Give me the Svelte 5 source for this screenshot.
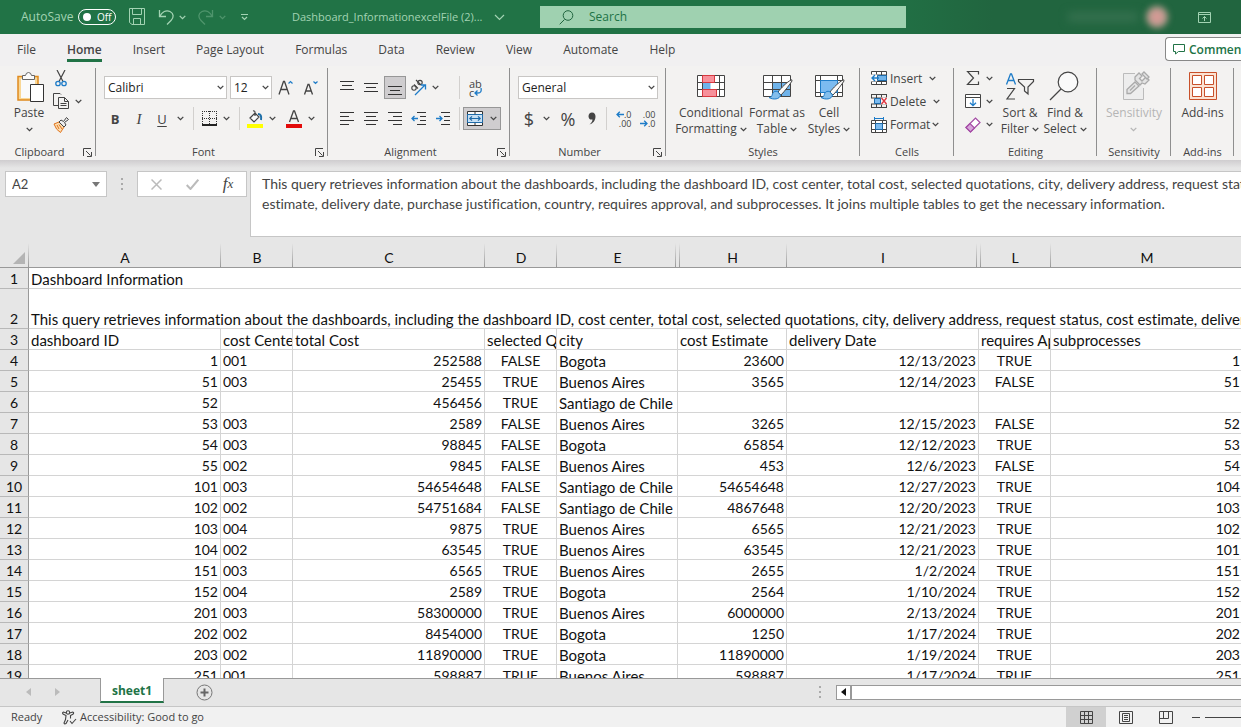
<script>
  const tabs = ['File', 'Home', 'Insert', 'Page Layout', 'Formulas', 'Data', 'Review', 'View', 'Automate', 'Help'];

  const description =
    'This query retrieves information about the dashboards, including the dashboard ID, cost center, total cost, selected quotations, city, delivery address, request status, cost estimate, delivery date, purchase justification, country, requires approval, and subprocesses. It joins multiple tables to get the necessary information.';
  // the formula box breaks its text before "estimate"
  const formula = description.replace('cost estimate', 'cost\nestimate');

  const columns = [
    { name: 'A', width: 192, align: 'right' },
    { name: 'B', width: 72, align: 'left' },
    { name: 'C', width: 192, align: 'right' },
    { name: 'D', width: 72, align: 'center' },
    { name: 'E', width: 121, align: 'text', hiddenAfter: true },
    { name: 'H', width: 109, align: 'right', hiddenBefore: true },
    { name: 'I', width: 192, align: 'right', hiddenAfter: true },
    { name: 'L', width: 72, align: 'center', hiddenBefore: true },
    { name: 'M', width: 192, align: 'right' }
  ];

  const titles = ['dashboard ID', 'cost Center', 'total Cost', 'selected Quotation', 'city', 'cost Estimate', 'delivery Date', 'requires Approval', 'subprocesses'];

  const rows = [
    ['1', '001', '252588', 'FALSE', 'Bogota', '23600', '12/13/2023', 'TRUE', '1'],
    ['51', '003', '25455', 'TRUE', 'Buenos Aires', '3565', '12/14/2023', 'FALSE', '51'],
    ['52', '', '456456', 'TRUE', 'Santiago de Chile', '', '', '', ''],
    ['53', '003', '2589', 'FALSE', 'Buenos Aires', '3265', '12/15/2023', 'FALSE', '52'],
    ['54', '003', '98845', 'FALSE', 'Bogota', '65854', '12/12/2023', 'TRUE', '53'],
    ['55', '002', '9845', 'FALSE', 'Buenos Aires', '453', '12/6/2023', 'FALSE', '54'],
    ['101', '003', '54654648', 'FALSE', 'Santiago de Chile', '54654648', '12/27/2023', 'TRUE', '104'],
    ['102', '002', '54751684', 'FALSE', 'Santiago de Chile', '4867648', '12/20/2023', 'TRUE', '103'],
    ['103', '004', '9875', 'TRUE', 'Buenos Aires', '6565', '12/21/2023', 'TRUE', '102'],
    ['104', '002', '63545', 'TRUE', 'Buenos Aires', '63545', '12/21/2023', 'TRUE', '101'],
    ['151', '003', '6565', 'TRUE', 'Buenos Aires', '2655', '1/2/2024', 'TRUE', '151'],
    ['152', '004', '2589', 'TRUE', 'Bogota', '2564', '1/10/2024', 'TRUE', '152'],
    ['201', '003', '58300000', 'TRUE', 'Buenos Aires', '6000000', '2/13/2024', 'TRUE', '201'],
    ['202', '002', '8454000', 'TRUE', 'Bogota', '1250', '1/17/2024', 'TRUE', '202'],
    ['203', '002', '11890000', 'TRUE', 'Bogota', '11890000', '1/19/2024', 'TRUE', '203'],
    ['251', '001', '598887', 'TRUE', 'Buenos Aires', '598887', '1/17/2024', 'TRUE', '251']
  ];
</script>

{#snippet chev()}
  <svg class="chev" width="7" height="5" viewBox="0 0 7 5"><path d="M.7.9 3.5 3.6 6.3.9" fill="none" stroke="currentColor" stroke-width="1.3" /></svg>
{/snippet}

{#snippet lines(d)}
  <svg width="16" height="16" viewBox="0 0 16 16"><path {d} fill="none" stroke="#333" /></svg>
{/snippet}

{#snippet brush()}
  <path d="M30 9c-4 2-10 8-13 12l3 3c4-4 9-11 11-14q0-2-1-1z" fill="#fafafa" stroke="#444" />
  <path d="M16.500 20.500c-4-1-5 2-5.500 4-.5 1.500-2 2-3 2 4 2.500 11 2 11.500-2.500z" fill="#83beec" stroke="#1e7cc8" />
{/snippet}

{#snippet groupLabel(text, launcher)}
  <div class="group-label">
    <span>{text}</span>
    {#if launcher}
      <button class="launcher" aria-label="{text} settings">
        <svg width="9" height="9" viewBox="0 0 9 9"><path d="M.5 8V.5H8M3 3l4.500 4.500M8.500 4v4.500H4" fill="none" stroke="#444" /></svg>
      </button>
    {/if}
  </div>
{/snippet}

<div class="app">
  <header class="titlebar">
    <label class="autosave">
      AutoSave
      <input type="checkbox" />
      <span class="toggle"><i></i>Off</span>
    </label>
    <button class="q-save" aria-label="Save">
      <svg width="17" height="18" viewBox="0 0 17 18"><path d="M.5.500h15v16H3l-2.500-2zM3.500.500v6h9v-6M4.500 16.500v-6h7v6" fill="none" stroke="currentColor" /></svg>
    </button>
    <button class="q-undo" aria-label="Undo">
      <svg width="17" height="18" viewBox="0 0 17 18"><path d="M1.500 2v6.500H8M2 8C4 4 8 1.500 12 3.500s4 6 1 9L9 16.500" fill="none" stroke="currentColor" stroke-width="1.3" /></svg>
      {@render chev()}
    </button>
    <button class="q-undo faded" aria-label="Redo">
      <svg width="17" height="18" viewBox="0 0 17 18"><path d="M14.500 2v6.500H8M14 8C12 4 8 1.500 4 3.500s-4 6-1 9l4 4" fill="none" stroke="currentColor" stroke-width="1.3" /></svg>
      {@render chev()}
    </button>
    <button class="q-more" aria-label="Customize Quick Access Toolbar">
      <svg width="9" height="8" viewBox="0 0 9 8"><path d="M1 1.500h7M2 4l2.500 2.500L7 4" fill="none" stroke="currentColor" stroke-width="1.200" /></svg>
    </button>
    <button class="doc">
      Dashboard_InformationexcelFile (2)...
      <svg width="11" height="7" viewBox="0 0 11 7"><path d="m1 1 4.500 4.500L10 1" fill="none" stroke="currentColor" stroke-width="1.200" /></svg>
    </button>
    <label class="search">
      <svg width="15" height="15" viewBox="0 0 15 15"><path d="M5.500 9.500.700 14.300" stroke="currentColor" /><circle cx="9" cy="5.500" r="4.800" fill="none" stroke="currentColor" /></svg>
      <input type="text" placeholder="Search" aria-label="Search" />
    </label>
    <div class="account"><span class="user"></span><span class="avatar"></span></div>
    <button class="display" aria-label="Ribbon Display Options">
      <svg width="13" height="11" viewBox="0 0 13 11"><path d="M.5.500h12v10H.500zM.500 2.500h12M6.500 9V4.500M4.500 6.500l2-2 2 2" fill="none" stroke="currentColor" /></svg>
    </button>
  </header>

  <nav class="tabs">
    {#each tabs as tab}
      <button class:active={tab === 'Home'}>{tab}</button>
    {/each}
    <button class="comments">
      <svg width="12" height="12" viewBox="0 0 12 12"><path d="M.5 1.500h11v7H5.500l-3 2.500V8.500h-2z" fill="none" stroke="currentColor" /></svg>
      Comments
    </button>
  </nav>

  <section class="ribbon">
    <div class="group clipboard">
      <div class="content">
        <button class="big paste">
          <svg width="32" height="32" viewBox="0 0 32 32">
            <path d="M5 5.500h20V29H5z" fill="#f9d795" stroke="#e08a1e" stroke-width="1.500" />
            <path d="M8 8h14v19H8z" fill="#fafafa" />
            <path d="M9.500 8.500v-4h3q.5-3 3-3t3 3h3v4z" fill="#fafafa" stroke="#666" />
            <path d="M17.500 13.500h13v17h-13z" fill="#fff" stroke="#333" />
          </svg>
          <span>Paste</span>
          {@render chev()}
        </button>
        <div class="stack">
          <button aria-label="Cut">
            <svg width="16" height="17" viewBox="0 0 16 17"><path d="m4 0 6 11.500M12 0 6 11.500" stroke="#444" stroke-width="1.200" /><g fill="none" stroke="#1e7cc8" stroke-width="1.300"><circle cx="5" cy="13.500" r="2.200" /><circle cx="11" cy="13.500" r="2.200" /></g></svg>
          </button>
          <button aria-label="Copy">
            <svg width="17" height="17" viewBox="0 0 17 17"><path d="M5.500 12.500h-5V.500H7l1 1M5.500 4.500h6l4 4v7h-10zM11.500 4.500v4h4M7.500 10.500h6M7.500 12.500h6" fill="none" stroke="#444" /></svg>
            {@render chev()}
          </button>
          <button aria-label="Format Painter">
            <svg width="16" height="16" viewBox="0 0 16 16"><path d="m1 7 5-2 5 5-3.500 5.500Q3 13 1 7zM4 8l2 4M6 7.500 9 12" fill="#fbdcae" stroke="#e0731e" /><path d="m6 5 2-2 2.500 1.500 3-4 2 2-4 3L13 8l-2 2z" fill="#eee" stroke="#444" /></svg>
          </button>
        </div>
      </div>
      {@render groupLabel('Clipboard', true)}
    </div>

    <div class="group font">
      <div class="content rows">
        <div class="row font-top">
          <span class="select"><select aria-label="Font"><option>Calibri</option></select>{@render chev()}</span>
          <span class="select"><select aria-label="Font size"><option>12</option></select>{@render chev()}</span>
          <button aria-label="Increase Font Size">
            <svg width="16" height="18" viewBox="0 0 16 18"><path d="M1 15.500 5.500 2.500h1L11 15.500M2.700 10.500h6.600" fill="none" stroke="#444" stroke-width="1.300" /><path d="m10.500 4.500 2-2 2 2" fill="none" stroke="#1e7cc8" stroke-width="1.200" /></svg>
          </button>
          <button aria-label="Decrease Font Size">
            <svg width="16" height="18" viewBox="0 0 16 18"><path d="M1.500 15.500 5 5.500h1l3.500 10M3 12h5" fill="none" stroke="#444" stroke-width="1.300" /><path d="m10.500 2.500 2 2 2-2" fill="none" stroke="#1e7cc8" stroke-width="1.200" /></svg>
          </button>
        </div>
        <div class="row font-bottom">
          <button class="letter bold">B</button>
          <button class="letter italic">I</button>
          <button class="letter underline">U</button>
          <button aria-label="Underline styles">{@render chev()}</button>
          <i class="sep"></i>
          <button aria-label="Borders">
            <svg width="15" height="15" viewBox="0 0 15 15"><path d="M0 .500h15M0 7.500h15M.500 0v15M7.500 0v15M14.500 0v15" stroke="#333" stroke-dasharray="1 1" /><path d="M0 14h15" stroke="#222" stroke-width="2" /></svg>
          </button>
          <button aria-label="Border styles">{@render chev()}</button>
          <i class="sep"></i>
          <button aria-label="Fill Color">
            <svg width="16" height="18" viewBox="0 0 16 18"><path d="M0 14h16v4H0z" fill="#ff0" /><path d="m3 8 5-5 4 4-5 5zM8 6V2.500q0-2-2-1.500" fill="#fafafa" stroke="#444" stroke-width="1.200" /><path d="M11 4q4 0 3 6" fill="none" stroke="#1f6fa8" stroke-width="2" /></svg>
          </button>
          <button aria-label="Fill colors">{@render chev()}</button>
          <span></span>
          <button aria-label="Font Color">
            <svg width="16" height="18" viewBox="0 0 16 18"><path d="M0 14h16v4H0z" fill="#e30b0b" /><path d="M3.500 12 7.500 1h1l4 11M5 8.500h6" fill="none" stroke="#444" stroke-width="1.300" /></svg>
          </button>
          <button aria-label="Font colors">{@render chev()}</button>
        </div>
      </div>
      {@render groupLabel('Font', true)}
    </div>

    <div class="group alignment">
      <div class="content rows">
        <div class="row">
          <button aria-label="Top Align">{@render lines('M1 1.500h14M3 5.500h10M1 9.500h14')}</button>
          <button aria-label="Middle Align">{@render lines('M1 3.500h14M3 7.500h10M1 11.500h14')}</button>
          <button class="pressed" aria-label="Bottom Align">{@render lines('M1 6.500h14M3 10.500h10M1 14.500h14')}</button>
          <button aria-label="Orientation">
            <svg width="18" height="17" viewBox="0 0 18 17"><g fill="none" stroke="#444" stroke-width="1.100"><circle cx="4" cy="9" r="2.200" /><path d="m4 5.500 4 4M6 1l5 5" /><circle cx="10" cy="3.600" r="2.200" /></g><path d="m5 16 10-10M11 6h4.500v4.500" fill="none" stroke="#1e7cc8" stroke-width="1.300" /></svg>
          </button>
          <button class="start" aria-label="Orientation options">{@render chev()}</button>
          <i class="sep"></i>
          <button class="wrap" aria-label="Wrap Text">
            <span>ab</span>
            <span class="wrap-end">
              c
              <svg width="8" height="9" viewBox="0 0 8 9"><path d="M7 0q1 5-3 5H1M3.500 2.500 1 5l2.500 2.500" fill="none" stroke="#1e7cc8" stroke-width="1.300" /></svg>
            </span>
          </button>
        </div>
        <div class="row">
          <button aria-label="Align Left">{@render lines('M1 1.500h14M1 5.500h9M1 9.500h14M1 13.500h9')}</button>
          <button aria-label="Center">{@render lines('M1 1.500h14M3 5.500h10M1 9.500h14M3 13.500h10')}</button>
          <button aria-label="Align Right">{@render lines('M1 1.500h14M6 5.500h9M1 9.500h14M6 13.500h9')}</button>
          <button aria-label="Decrease Indent">
            <svg width="16" height="16" viewBox="0 0 16 16"><path d="M6 1.500h9M9 5.500h6M9 9.500h6M6 13.500h9" stroke="#333" /><path d="M7 7.500H1M3.500 5 1 7.500 3.500 10" fill="none" stroke="#1e7cc8" stroke-width="1.300" /></svg>
          </button>
          <button aria-label="Increase Indent">
            <svg width="16" height="16" viewBox="0 0 16 16"><path d="M6 1.500h9M9 5.500h6M9 9.500h6M6 13.500h9" stroke="#333" /><path d="M1 7.500h6M4.500 5 7 7.500 4.500 10" fill="none" stroke="#1e7cc8" stroke-width="1.300" /></svg>
          </button>
          <i class="sep"></i>
          <button class="pressed merge" aria-label="Merge and Center">
            <svg width="16" height="15" viewBox="0 0 16 15"><path d="M.5.500h15v14H.500zM8 0v4M8 11v4" fill="#fafafa" stroke="#333" /><path d="M.500 3.500h15v8H.500z" fill="#c7e0f4" stroke="#1e6aa8" /><path d="M3 7.500h10M5 5.300 2.800 7.500 5 9.700M11 5.300l2.200 2.200L11 9.700" fill="none" stroke="#1e6aa8" stroke-width="1.200" /></svg>
            {@render chev()}
          </button>
        </div>
      </div>
      {@render groupLabel('Alignment', true)}
    </div>

    <div class="group number">
      <div class="content rows">
        <span class="select"><select aria-label="Number Format"><option>General</option></select>{@render chev()}</span>
        <div class="row">
          <button class="symbol">$</button>
          <button aria-label="Accounting formats">{@render chev()}</button>
          <button class="symbol">%</button>
          <button aria-label="Comma Style">
            <svg width="8" height="13" viewBox="0 0 8 13"><path d="M4 .500c2.500 0 3.500 1.800 3.500 4C7.500 8.500 5 11.500 1.500 12.500 3.500 11 4.500 9 4.500 7.500 2 8 .500 6.500.500 4.200S2 .500 4 .500z" fill="#444" /></svg>
          </button>
          <i class="sep"></i>
          <button class="decimal">
            <span><svg width="8" height="7" viewBox="0 0 8 7"><path d="M8 3.500H1M3.800.700 1 3.500l2.800 2.800" fill="none" stroke="#1e7cc8" stroke-width="1.300" /></svg>.0</span>
            <span>.00</span>
          </button>
          <button class="decimal">
            <span>.00</span>
            <span><svg width="8" height="7" viewBox="0 0 8 7"><path d="M0 3.500h7M4.200.700 7 3.500 4.200 6.300" fill="none" stroke="#1e7cc8" stroke-width="1.300" /></svg>.0</span>
          </button>
        </div>
      </div>
      {@render groupLabel('Number', true)}
    </div>

    <div class="group styles">
      <div class="content">
        <button class="big">
          <svg width="32" height="32" viewBox="0 0 32 32">
            <path d="M2.500 4.500h27v21h-27z" fill="#fff" /><path d="M7.500 4.500h12v7h-12zM7.500 18.500h14v7h-14z" fill="#f7919b" /><path d="M7.500 11.500h8v7h-8z" fill="#6fb3ea" />
            <path d="M2.500 4.500h27v21h-27zM2.500 11.500h27M2.500 18.500h27M7.500 4v22M24.500 4v22" fill="none" stroke="#444" />
            <path d="M7.500 4.500h12v7h-12zM7.500 18.500h14v7h-14z" fill="none" stroke="#d8383f" />
          </svg>
          <span>Conditional</span>
          <span>Formatting {@render chev()}</span>
        </button>
        <button class="big">
          <svg width="32" height="32" viewBox="0 0 32 32">
            <path d="M2.500 4.500h27v21h-27z" fill="#fff" /><path d="M11.500 11.500h18v14h-18z" fill="#6fb3ea" />
            <path d="M2.500 4.500h27v21h-27zM2.500 11.500h27M2.500 18.500h27M11.500 4v22M20.500 4v22" fill="none" stroke="#444" />
            {@render brush()}
          </svg>
          <span>Format as</span>
          <span>Table {@render chev()}</span>
        </button>
        <button class="big">
          <svg width="32" height="32" viewBox="0 0 32 32">
            <path d="M2.500 4.500h27v21h-27zM2.500 9.500h27M2.500 21.500h27M7.500 4v22M24.500 4v22" fill="#fff" stroke="#444" />
            <path d="M7.500 9.500h17v12h-17z" fill="#7cbbf0" stroke="#1e7cc8" />
            {@render brush()}
          </svg>
          <span>Cell</span>
          <span>Styles {@render chev()}</span>
        </button>
      </div>
      {@render groupLabel('Styles', false)}
    </div>

    <div class="group cells">
      <div class="content">
        <div class="stack">
          <button>
            <svg width="17" height="15" viewBox="0 0 17 15"><path d="M.500.500h15v13H.500zM.500 4h15M.500 10.500h15M5.500 0v14M10.500 0v14" fill="#fff" stroke="#444" /><path d="M6.500 4.500h9v5h-9z" fill="#6fb3ea" stroke="#1e6aa8" /><path d="M0 3.500h6v7H0z" fill="#fafafa" /><path d="M8 7H1M4 4 1 7l3 3" fill="none" stroke="#1e7cc8" stroke-width="1.400" /></svg>
            <span class="insert">Insert</span>{@render chev()}
          </button>
          <button>
            <svg width="17" height="15" viewBox="0 0 17 15"><path d="M0 .500h16M0 13.500h16M.500 0v4M.500 10v4M5.500 0v14M10.500 0v14M15.500 0v4M15.500 10v4M0 4h16M0 10h16" fill="none" stroke="#444" /><path d="M3.500 4.500h6v5h-6z" fill="#7cbbf0" stroke="#1e6aa8" /><path d="M10 3.500h7v7h-7z" fill="#fafafa" /><path d="m10.500 4 5 6M15.500 4l-5 6" stroke="#e0353f" stroke-width="1.400" /></svg>
            <span>Delete</span>{@render chev()}
          </button>
          <button>
            <svg width="17" height="16" viewBox="0 0 17 16"><path d="M.500 3.500h15v12H.500zM.500 6.500h15M.500 12.500h15M4.500 3v13M11.500 3v13" fill="#fff" stroke="#444" /><path d="M4.500 6.500h7v6h-7z" fill="#7cbbf0" stroke="#1e6aa8" /><path d="M4 1.500h8M3.500 0v3M12.500 0v3" stroke="#1e7cc8" /></svg>
            <span class="format">Format</span>{@render chev()}
          </button>
        </div>
      </div>
      {@render groupLabel('Cells', false)}
    </div>

    <div class="group editing">
      <div class="content">
        <div class="stack">
          <button aria-label="AutoSum">
            <svg width="17" height="15" viewBox="0 0 17 15"><path d="M13.500 3.500v-3h-11l6 6.500-6 6.500h11v-3" fill="none" stroke="#444" stroke-width="1.200" /></svg>
            {@render chev()}
          </button>
          <button aria-label="Fill">
            <svg width="17" height="15" viewBox="0 0 17 15"><path d="M.500.500h15v13H.500zM.500 3.500h15" fill="#fff" stroke="#444" /><path d="M8 5v6.500M5 8.700l3 3 3-3" fill="none" stroke="#1e7cc8" stroke-width="1.300" /></svg>
            {@render chev()}
          </button>
          <button aria-label="Clear">
            <svg width="17" height="16" viewBox="0 0 17 16"><path d="m1 10.500 9.500-9.500 4.500 4.500L5.500 15z" fill="#fff" stroke="#a349a4" stroke-width="1.200" /><path d="m1 10.500 4-4L9.500 11l-4 4z" fill="#d7a5da" stroke="#a349a4" stroke-width="1.200" /></svg>
            {@render chev()}
          </button>
        </div>
        <button class="big">
          <svg width="32" height="32" viewBox="0 0 32 32"><path d="M2.500 13.500 6.500 3h1l4 10.500M4 9.500h6" fill="none" stroke="#1e7cc8" stroke-width="1.300" /><path d="M3 17.500h7.500L3 28h8M14.500 8.500h15v2L24 16v7l-3.500-3v-4l-6-5.500z" fill="none" stroke="#444" stroke-width="1.200" /></svg>
          <span>Sort &amp;</span>
          <span>Filter {@render chev()}</span>
        </button>
        <button class="big">
          <svg width="32" height="32" viewBox="0 0 32 32"><circle cx="19" cy="11" r="9.800" fill="#fafafa" stroke="#444" stroke-width="1.200" /><path d="M12 18 1 29" stroke="#444" stroke-width="1.300" /></svg>
          <span>Find &amp;</span>
          <span>Select {@render chev()}</span>
        </button>
      </div>
      {@render groupLabel('Editing', false)}
    </div>

    <div class="group sensitivity">
      <div class="content">
        <button class="big" disabled>
          <svg width="32" height="32" viewBox="0 0 32 32"><path d="M17 2.500H5.500v26h20V17" fill="#ededed" stroke="#bbb" /><g fill="#e4e4e4" stroke="#aaa" stroke-width="1.300"><path d="m9 18.500 8-7.500 4 4-8.500 7.500H9z" /><path d="m12 19.500 5-5" /><path d="m17 6 4-4 3 3-2.500 2.500L24 10l4-4 3 3-4 4-3-1-2 2-5-5z" /><path d="m24 3 2-2 5 5-2 2z" /></g></svg>
          <span>Sensitivity</span>
          {@render chev()}
        </button>
      </div>
      {@render groupLabel('Sensitivity', false)}
    </div>

    <div class="group addins">
      <div class="content">
        <button class="big">
          <svg width="32" height="32" viewBox="0 0 32 32"><path d="M2.500 1.500h27v27h-27z" fill="#fbe3d3" stroke="#c8502a" /><path d="M5.500 4.500h9v9h-9zM17.500 4.500h9v9h-9zM5.500 16.500h9v9h-9zM17.500 16.500h9v9h-9z" fill="#fff" stroke="#c8502a" /></svg>
          <span>Add-ins</span>
        </button>
      </div>
      {@render groupLabel('Add-ins', false)}
    </div>
  </section>

  <section class="formula-bar">
    <span class="name-box">
      <input type="text" value="A2" aria-label="Name Box" />
      <svg width="8" height="5" viewBox="0 0 8 5"><path d="M0 0h8L4 5z" fill="#777" /></svg>
    </span>
    <svg class="grip" width="3" height="12" viewBox="0 0 3 12"><path d="M1 0v2M1 5v2M1 10v2" stroke="#aaa" stroke-width="2" /></svg>
    <div class="fx">
      <button aria-label="Cancel"><svg width="11" height="11" viewBox="0 0 11 11"><path d="m.500.500 10 10M10.500.500l-10 10" stroke="#bbb" stroke-width="1.500" /></svg></button>
      <button aria-label="Enter"><svg width="13" height="11" viewBox="0 0 13 11"><path d="m.700 6 3.800 4L12.300.700" fill="none" stroke="#bbb" stroke-width="2" /></svg></button>
      <button aria-label="Insert Function" class="func">f<small>x</small></button>
    </div>
    <textarea wrap="off" aria-label="Formula Bar" value={formula}></textarea>
  </section>

  <main class="sheet">
    <table>
      <colgroup>
        <col class="row-head" />
        {#each columns as column}
          <col style="width: {column.width}px" />
        {/each}
      </colgroup>
      <thead>
        <tr>
          <th class="corner"><svg width="12" height="12" viewBox="0 0 12 12"><path d="M12 0v12H0z" fill="#b4b4b4" /></svg></th>
          {#each columns as column}
            <th class:hidden-after={column.hiddenAfter} class:hidden-before={column.hiddenBefore}>{column.name}</th>
          {/each}
        </tr>
      </thead>
      <tbody>
        <tr>
          <th>1</th>
          <td class="text" colspan="9">Dashboard Information</td>
        </tr>
        <tr class="tall">
          <th>2</th>
          <td class="text" colspan="9">{description}</td>
        </tr>
        <tr>
          <th>3</th>
          {#each titles as title}
            <td class="text">{title}</td>
          {/each}
        </tr>
        {#each rows as row, i}
          <tr>
            <th>{i + 4}</th>
            {#each row as cell, c}
              <td class={columns[c].align}>{cell}</td>
            {/each}
          </tr>
        {/each}
      </tbody>
    </table>
  </main>

  <section class="sheet-tabs">
    <button class="arrow" aria-label="Previous sheet"><svg width="5" height="8" viewBox="0 0 5 8"><path d="M5 0v8L0 4z" fill="#bbb" /></svg></button>
    <button class="arrow" aria-label="Next sheet"><svg width="5" height="8" viewBox="0 0 5 8"><path d="M0 0v8l5-4z" fill="#bbb" /></svg></button>
    <button class="sheet-tab">sheet1</button>
    <button class="add" aria-label="New sheet"><svg width="17" height="17" viewBox="0 0 17 17"><circle cx="8.500" cy="8.500" r="7.500" fill="none" stroke="#777" /><path d="M4.500 8.500h8M8.500 4.500v8" stroke="#666" stroke-width="2" /></svg></button>
    <svg class="grip" width="3" height="12" viewBox="0 0 3 12"><path d="M1 0v2M1 5v2M1 10v2" stroke="#aaa" stroke-width="2" /></svg>
    <div class="scroll">
      <button aria-label="Scroll left"><svg width="5" height="8" viewBox="0 0 5 8"><path d="M5 0v8L0 4z" fill="#111" /></svg></button>
    </div>
  </section>

  <footer class="status">
    <span class="ready">Ready</span>
    <button class="access">
      <svg width="15" height="15" viewBox="0 0 15 15"><g fill="none" stroke="#444" stroke-width="1.100"><circle cx="6" cy="2.500" r="1.700" /><path d="M4.300 3 1.500 2q-1.500.500-.500 2l3 1.500-.500 4-1.500 3.500q.5 1.500 2 .500L6 10M7.700 3l3-1q1.500.500.500 2L8.500 5.500v3M8 11l2 2.500L14 9" /></g></svg>
      Accessibility: Good to go
    </button>
    <button class="view on" aria-label="Normal"><svg width="13" height="13" viewBox="0 0 13 13"><path d="M.500.500h12v12H.500zM.500 4.500h12M.500 8.500h12M4.500.500v12M8.500.500v12" fill="none" stroke="#444" /></svg></button>
    <button class="view" aria-label="Page Layout"><svg width="14" height="13" viewBox="0 0 14 13"><path d="M.500.500h13v12H.500zM3.500 2.500h7v8h-7zM5 4.500h4M5 6.500h4M5 8.500h4" fill="none" stroke="#444" /></svg></button>
    <button class="view" aria-label="Page Break Preview"><svg width="14" height="13" viewBox="0 0 14 13"><path d="M.500.500h13v12H.500zM4.500.500v7M9.500.500v7M.500 7.500h9" fill="none" stroke="#444" /></svg></button>
    <button class="minus" aria-label="Zoom out"><svg width="8" height="1" viewBox="0 0 8 1"><path d="M0 .500h8" stroke="#444" /></svg></button>
    <input type="range" aria-label="Zoom" />
  </footer>
</div>

<style>
  :global(body) {
    overflow: hidden;
  }

  .app {
    display: flex;
    flex-direction: column;
    height: 100vh;
    overflow: hidden;
    background: #e6e6e6;
    color: #444;
    font: 12px/16px "Open Sans", "Noto Sans", sans-serif;
  }

  button,
  input,
  select,
  textarea {
    margin: 0;
    padding: 0;
    border: 0;
    border-radius: 0;
    background: none;
    color: inherit;
    font: inherit;
    outline: none;
  }

  button {
    display: flex;
    align-items: center;
    justify-content: center;
    flex-shrink: 0;
    white-space: nowrap;
  }

  svg {
    display: block;
    flex-shrink: 0;
  }

  /* title bar */
  .titlebar {
    display: flex;
    align-items: center;
    flex-shrink: 0;
    height: 34px;
    padding-left: 21px;
    background: linear-gradient(90deg, #217346 70%, #21653f 80%);
    color: #a3d3b3;
  }

  .autosave {
    display: flex;
    align-items: center;
    width: 108px;
  }

  .autosave input {
    width: 0;
    height: 0;
    appearance: none;
  }

  .toggle {
    display: flex;
    align-items: center;
    box-sizing: border-box;
    width: 38px;
    height: 16px;
    margin-left: auto;
    margin-right: 13px;
    padding-left: 4px;
    gap: 6px;
    border: 1px solid #fff;
    border-radius: 8px;
    color: #fff;
    font-size: 10px;
  }

  .toggle i {
    width: 8px;
    height: 8px;
    border-radius: 4px;
    background: #fff;
  }

  .q-undo {
    gap: 4px;
    margin-left: 12px;
  }

  .faded {
    opacity: 0.35;
  }

  .q-more {
    width: 36px;
  }

  .doc {
    justify-content: space-between;
    width: 213px;
    margin-left: 30px;
    font-size: 11px;
  }

  .search {
    display: flex;
    align-items: center;
    flex: 0 1 366px;
    height: 22px;
    margin-left: 35px;
    background: #9fd1b0;
    color: #21653f;
  }

  .search svg {
    margin: 0 15px 0 19px;
  }

  .search input {
    flex: 1;
    min-width: 0;
  }

  .search input::placeholder {
    color: #217346;
    opacity: 1;
  }

  .account {
    display: flex;
    align-items: center;
    gap: 8px;
    margin-left: auto;
  }

  .user {
    width: 70px;
    height: 10px;
    background: #34704e;
    filter: blur(4px);
  }

  .avatar {
    width: 22px;
    height: 22px;
    border-radius: 11px;
    background: radial-gradient(#d99a96 20%, #8b9d84);
    filter: blur(3px);
  }

  .display {
    width: 73px;
  }

  /* tabs */
  .tabs {
    display: flex;
    align-items: flex-start;
    flex-shrink: 0;
    gap: 31px;
    height: 32px;
    padding-left: 17px;
    overflow: hidden;
    background: #f1f0f1;
  }

  .tabs button {
    margin-top: 6px;
    border-bottom: 3px solid transparent;
    line-height: 19px;
  }

  .tabs .active {
    border-bottom-color: #217346;
    font-weight: 600;
  }

  .tabs .comments {
    justify-content: flex-start;
    box-sizing: border-box;
    width: 76px;
    height: 24px;
    margin: 3px 0 0 auto;
    padding-left: 7px;
    gap: 4px;
    overflow: hidden;
    border: 1px solid #888;
    border-right: 0;
    border-radius: 4px 0 0 4px;
    background: #fff;
    color: #217346;
    font-weight: 600;
  }

  /* ribbon */
  .ribbon {
    display: flex;
    flex-shrink: 0;
    height: 92px;
    padding-top: 2px;
    overflow: hidden;
    background: #f3f2f1;
  }

  .group {
    display: flex;
    flex-direction: column;
    flex-shrink: 0;
    box-sizing: border-box;
    background: linear-gradient(#8f8f8f, #8f8f8f) right top / 1px 88px no-repeat;
  }

  .content {
    display: flex;
    flex: 1;
  }

  .group-label {
    display: flex;
    align-items: center;
    height: 16px;
    font-size: 11px;
  }

  .group-label span {
    flex: 1;
    text-align: center;
  }

  .launcher {
    width: 17px;
  }

  .rows {
    flex-direction: column;
    gap: 8px;
    padding-top: 8px;
  }

  .row {
    display: grid;
    align-items: center;
    height: 23px;
  }

  .row button {
    height: 23px;
  }

  .sep {
    justify-self: center;
    width: 1px;
    height: 23px;
    background: #d2d0ce;
  }

  .big {
    flex-direction: column;
    justify-content: flex-start;
    padding-top: 3px;
  }

  .big > svg:first-child {
    margin-bottom: 2px;
  }

  .big > .chev {
    margin-top: 6px;
  }

  .big span .chev {
    display: inline-block;
    vertical-align: middle;
  }

  .big:disabled {
    color: #b5b5b5;
  }

  .stack {
    display: flex;
    flex-direction: column;
    gap: 2px;
  }

  .stack button {
    justify-content: flex-start;
    height: 21px;
  }

  .select {
    display: grid;
    align-items: center;
    height: 23px;
  }

  .select select {
    grid-area: 1 / 1;
    box-sizing: border-box;
    width: 100%;
    height: 23px;
    padding-left: 3px;
    border: 1px solid #c8c6c4;
    appearance: none;
    background: #fff;
    color: #222;
  }

  .select .chev {
    grid-area: 1 / 1;
    justify-self: end;
    margin-right: 3px;
    pointer-events: none;
  }

  .clipboard {
    width: 96px;
  }

  .clipboard .content {
    padding-left: 13px;
  }

  .paste {
    width: 32px;
    margin-right: 8px;
  }

  .clipboard .stack button {
    gap: 5px;
  }

  .font {
    width: 232px;
  }

  .font .content {
    padding-left: 7px;
  }

  .font-top {
    grid-template-columns: 123px 42px 22px 22px;
    column-gap: 3px;
    padding-left: 1px;
  }

  .font-bottom {
    grid-template-columns: 24px 24px 22px 14px 13px 18px 16px 11px 20px 14px 5px 20px 14px;
  }

  .letter {
    font-size: 13px;
  }

  .bold {
    font-weight: 700;
  }

  .italic {
    font-family: "Liberation Serif", serif;
    font-style: italic;
    font-size: 15px;
  }

  .underline {
    text-decoration: underline;
    text-underline-offset: 2px;
  }

  .alignment {
    width: 182px;
  }

  .alignment .content {
    padding-left: 7px;
  }

  .alignment .row {
    grid-template-columns: 24px 24px 24px 24px 24px 8px 38px;
  }

  .pressed {
    box-sizing: border-box;
    margin: 0 1px;
    border: 1px solid #979797;
    background: #cfcdcf;
  }

  .merge {
    gap: 7px;
    margin: 0;
  }

  .alignment .start {
    justify-content: flex-start;
    padding-left: 1px;
  }

  .wrap {
    flex-direction: column;
    align-items: flex-start;
    padding-left: 6px;
    font-size: 11px;
    line-height: 9px;
  }

  .wrap-end {
    display: flex;
  }

  .number {
    width: 156px;
  }

  .number .content {
    padding-left: 8px;
  }

  .number .select {
    width: 140px;
  }

  .number .row {
    grid-template-columns: 22px 12px 32px 16px 13px 20px 28px;
  }

  .number .symbol {
    font-size: 18px;
  }

  .decimal {
    flex-direction: column;
    align-items: flex-end;
    justify-self: center;
    width: 17px;
    font-size: 9px;
    line-height: 9px;
  }

  .decimal span {
    display: flex;
    align-items: center;
  }

  .styles {
    width: 194px;
  }

  .styles .content {
    display: grid;
    grid-template-columns: 74px 58px 46px;
    padding-left: 8px;
  }

  .cells {
    width: 94px;
  }

  .cells .content {
    padding-left: 11px;
  }

  .cells .stack span {
    width: 43px;
    padding-left: 2px;
    text-align: left;
  }

  .cells .stack .insert {
    width: 39px;
  }

  .cells .stack .format {
    width: 42px;
  }

  .editing {
    width: 143px;
  }

  .editing .content {
    display: grid;
    grid-template-columns: 33px 44px 46px;
    padding-left: 11px;
  }

  .editing .stack button {
    gap: 4px;
  }

  .sensitivity {
    width: 74px;
  }

  .addins {
    width: 63px;
  }

  .sensitivity .content,
  .addins .content {
    justify-content: center;
  }

  /* formula bar */
  .formula-bar {
    display: flex;
    align-items: flex-start;
    flex-shrink: 0;
    height: 66px;
    padding: 11px 0 0 5px;
    background: linear-gradient(#cfcdcf, #e6e6e6 8px);
  }

  .name-box {
    display: flex;
    align-items: center;
    box-sizing: border-box;
    width: 102px;
    height: 26px;
    padding: 0 6px;
    border: 1px solid #c6c6c6;
    background: #fff;
  }

  .name-box input {
    flex: 1;
    min-width: 0;
    font: 13px/20px Lato, "Open Sans", sans-serif;
  }

  .formula-bar .grip {
    margin: 7px 13px 0 14px;
  }

  .fx {
    display: flex;
    box-sizing: border-box;
    width: 110px;
    height: 26px;
    border: 1px solid #c6c6c6;
    background: #fff;
  }

  .fx button {
    flex: 1;
  }

  .fx .func {
    font: italic 17px/16px "Liberation Serif", serif;
  }

  .func small {
    font-size: 13px;
  }

  textarea {
    flex: 1;
    box-sizing: border-box;
    height: 66px;
    margin-left: 3px;
    padding: 2px 0 0 11px;
    overflow: hidden;
    resize: none;
    border: 1px solid #c6c6c6;
    border-right: 0;
    background: #fff;
    font: 14px/20px Lato, "Open Sans", sans-serif;
    font-variant-ligatures: none;
  }

  /* grid */
  .sheet {
    flex: 1;
    min-height: 0;
    overflow: hidden;
    background: #fff;
    color: #111;
    font: 14px/18px Lato, "Open Sans", sans-serif;
    font-variant-ligatures: none;
  }

  table {
    width: 1243px;
    min-width: 100%;
    table-layout: fixed;
    border-spacing: 0;
  }

  .row-head {
    width: 29px;
  }

  th,
  td {
    box-sizing: border-box;
    height: 21px;
    padding: 0;
    overflow: hidden;
    vertical-align: bottom;
    white-space: nowrap;
    font-weight: 400;
  }

  td {
    padding: 0 2px;
    border-right: 1px solid #d4d4d4;
    border-bottom: 1px solid #d4d4d4;
  }

  .text {
    font-size: 15px;
  }

  tbody th {
    border-right: 1px solid #999;
    border-bottom: 1px solid #b8b8b8;
    background: #e6e6e6;
  }

  thead th {
    --line: linear-gradient(#e6e6e6, #999);
    height: 31px;
    border-bottom: 1px solid #999;
    background: var(--line) right bottom / 1px 24px no-repeat #e6e6e6;
  }

  thead .hidden-after {
    background-position: right 2px bottom;
  }

  thead .hidden-before {
    background-image: var(--line), var(--line);
    background-position: right bottom, left 1px bottom;
  }

  .corner svg {
    margin: 0 0 3px 13px;
  }

  .tall td,
  .tall th {
    height: 40px;
  }

  .right {
    text-align: right;
  }

  .center {
    text-align: center;
  }

  /* sheet tabs */
  .sheet-tabs {
    display: flex;
    align-items: center;
    flex-shrink: 0;
    box-sizing: border-box;
    height: 29px;
    padding-left: 14px;
    border-bottom: 1px solid #c6c6c6;
    background: linear-gradient(#999, #999) top / 100% 1px no-repeat #e6e6e6;
  }

  .arrow {
    width: 29px;
  }

  .sheet-tab {
    align-self: flex-start;
    box-sizing: border-box;
    width: 64px;
    height: 25px;
    margin-left: 28px;
    padding-top: 3px;
    border: solid #999;
    border-width: 0 1px;
    border-bottom: 2px solid #217346;
    background: #fff;
    color: #217346;
    font-weight: 700;
  }

  .add {
    margin-left: 32px;
  }

  .sheet-tabs .grip {
    margin-left: auto;
  }

  .scroll {
    display: flex;
    box-sizing: border-box;
    width: 405px;
    height: 15px;
    margin-left: 14px;
    border: 1px solid #999;
    border-right: 0;
    background: #fff;
  }

  .scroll button {
    width: 15px;
    border-right: 2px solid #999;
  }

  /* status bar */
  .status {
    display: flex;
    align-items: center;
    flex-shrink: 0;
    height: 20px;
    padding-left: 11px;
    background: #f1f1f1;
    font-size: 11px;
  }

  .ready {
    width: 51px;
  }

  .access {
    gap: 3px;
    margin-right: auto;
  }

  .view {
    width: 40px;
    height: 20px;
  }

  .on {
    background: #d0d0d0;
  }

  .minus {
    width: 19px;
  }

  input[type='range'] {
    width: 36px;
    height: 1px;
    appearance: none;
    background: #444;
  }

  input[type='range']::-webkit-slider-thumb {
    width: 1px;
    height: 1px;
    appearance: none;
  }
</style>
